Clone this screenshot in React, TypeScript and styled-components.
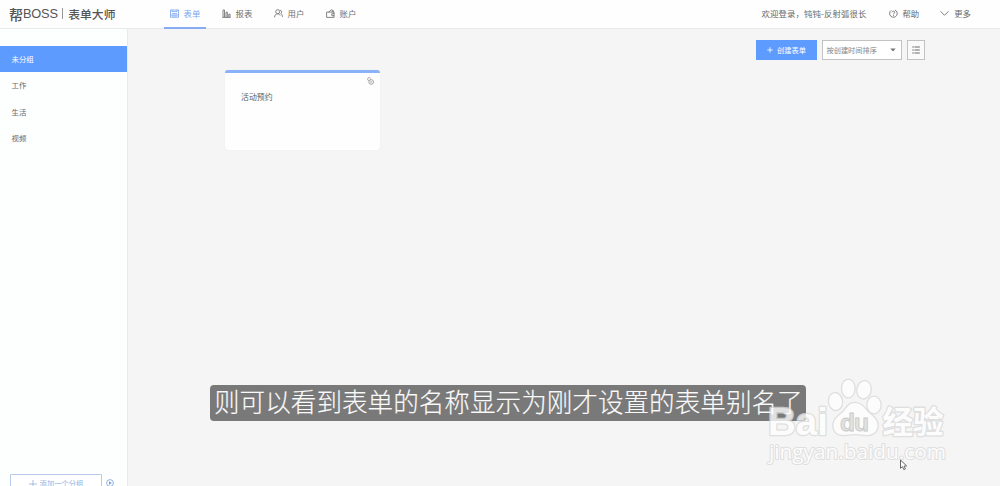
import React from "react";
import styled, { createGlobalStyle, css } from "styled-components";

const GlobalStyle = createGlobalStyle`
  * { box-sizing: border-box; }
  body {
    margin: 0;
    overflow: hidden;
    background: #f5f5f5;
    color: #555;
    font-family: "Noto Sans CJK SC", "Liberation Sans", sans-serif;
  }
`;

const Page = styled.div`
  position: relative;
  display: flex;
  flex-direction: column;
  width: 1000px;
  height: 486px;
  overflow: hidden;
  background: #f5f5f5;
`;

const Header = styled.header`
  display: flex;
  flex: none;
  height: 29px;
  background: #fefefe;
  border-bottom: 1px solid #e9e9e9;
  white-space: nowrap;
`;

const Brand = styled.div`
  display: flex;
  align-items: center;
  width: 164px;
  height: 27px;
  padding-left: 9px;
  color: #555;
  font-size: 12px;
  line-height: 26px;
`;

const BrandMark = styled.span`
  font-size: 14px;
  font-weight: 500;
`;

const BrandLatin = styled.span`
  font: 12.8px/27px "Liberation Sans", sans-serif;
  letter-spacing: -0.2px;
`;

const BrandDivider = styled.i`
  width: 1px;
  height: 11px;
  margin: 0 5px 0 4.5px;
  background: #999;
`;

const BrandName = styled.span`
  font-size: 11.8px;
  font-weight: 500;
`;

const Nav = styled.nav`
  display: flex;
  gap: 10px;
`;

const NavItem = styled.a<{ $active?: boolean }>`
  display: flex;
  align-items: center;
  gap: 5px;
  width: 42px;
  height: 29px;
  padding: 0 0 3px 5.6px;
  color: #707070;
  font-size: 8.4px;
  line-height: 26px;
  ${(p) =>
    p.$active &&
    css`
      color: #7ba6ee;
      box-shadow: inset 0 -2px #86adf3;
    `}
`;

const Account = styled.div`
  display: flex;
  align-items: center;
  height: 26px;
  margin-left: auto;
  padding-right: 29px;
  font-size: 8.4px;
  line-height: 26px;
  color: #686868;
`;

const Welcome = styled.span`
  width: 127px;
  letter-spacing: 0.12px;
`;

const HeaderLink = styled.a`
  display: flex;
  align-items: center;
  gap: 5px;
  & + & { margin-left: 21px; }
`;

const Body = styled.div`
  display: flex;
  flex: 1;
  min-height: 0;
`;

const Sidebar = styled.aside`
  display: flex;
  flex-direction: column;
  flex: none;
  width: 128px;
  padding-top: 16.6px;
  background: #fdfefe;
  border-right: 1px solid #e9e9e9;
`;

const Group = styled.a<{ $active?: boolean }>`
  height: 26.6px;
  padding-left: 11.5px;
  font-size: 7.4px;
  line-height: 25.6px;
  color: ${(p) => (p.$active ? "#fff" : "#686868")};
  background: ${(p) => (p.$active ? "#5e9bff" : "transparent")};
`;

const SidebarFooter = styled.div`
  display: flex;
  align-items: flex-start;
  gap: 4px;
  height: 12px;
  margin-top: auto;
  padding-left: 10px;
  overflow: hidden;
`;

const AddGroup = styled.button`
  display: flex;
  align-items: center;
  justify-content: center;
  gap: 3px;
  flex: none;
  width: 92px;
  height: 19px;
  padding: 0;
  border: 1px solid #b9cbe8;
  border-radius: 1px;
  background: #fff;
  color: #98b2de;
  font: 7.3px/17px "Noto Sans CJK SC", sans-serif;
`;

const PlayIcon = styled.svg`
  flex: none;
  margin-top: 5px;
`;

const Main = styled.main`
  flex: 1;
  padding: 11px 75px 0 97px;
`;

const Toolbar = styled.div`
  display: flex;
  justify-content: flex-end;
  align-items: center;
  height: 20px;
  margin-bottom: 10px;
`;

const CreateButton = styled.button`
  display: flex;
  align-items: center;
  justify-content: center;
  gap: 4px;
  width: 61px;
  height: 20px;
  padding: 0;
  border: 0;
  background: #5e9bff;
  color: #fff;
  font: 7.2px/20px "Noto Sans CJK SC", sans-serif;
`;

const SortSelect = styled.div`
  display: flex;
  align-items: center;
  justify-content: space-between;
  width: 80px;
  height: 20px;
  margin: 0 5px;
  padding: 0 5px 0 3.5px;
  border: 1px solid #c2c2c2;
  background: #fff;
  color: #858585;
  font-size: 7.2px;
  line-height: 17px;
`;

const ViewButton = styled.button`
  display: flex;
  align-items: center;
  justify-content: center;
  width: 18px;
  height: 20px;
  padding: 0;
  border: 1px solid #c2c2c2;
  background: #fafafa;
`;

const FormCard = styled.article`
  display: flex;
  justify-content: space-between;
  width: 155px;
  height: 80px;
  padding: 3.5px 6px 0 16px;
  border-top: 3px solid #8ab2fa;
  border-radius: 3px;
  background: #fefefe;
  box-shadow: 0 0 1px #e2e2e2;
`;

const FormTitle = styled.h3`
  margin: 14.5px 0 0;
  font-size: 7.9px;
  line-height: 12px;
  font-weight: 400;
  color: #606060;
`;

const Caption = styled.div`
  position: absolute;
  left: 210px;
  top: 385px;
  width: 596px;
  height: 36px;
  padding-left: 4px;
  border-radius: 4px;
  background: #797979;
  color: #fafafa;
  font-size: 25.6px;
  font-weight: 300;
  line-height: 32px;
  -webkit-text-stroke: 0.15px #fafafa;
  white-space: nowrap;
`;

const Watermark = styled.svg`
  position: absolute;
  left: 760px;
  top: 372px;
`;

const Pointer = styled.svg`
  position: absolute;
  left: 899px;
  top: 459px;
`;

const lineProps = { fill: "none", stroke: "currentColor", strokeWidth: 0.85 };

function FormIcon() {
  return (
    <svg width="9" height="9" viewBox="0 0 9 9" {...lineProps}>
      <rect x=".6" y="1" width="7.8" height="7.2" />
      <path d="M2 1v1.600h5V1M2 4.600h5M.6 6h7.800M2 7h5" />
    </svg>
  );
}

function ReportIcon() {
  return (
    <svg width="9" height="9" viewBox="0 0 9 9" {...lineProps}>
      <path d="M.4 8.4h8.2M1 1v7.4M2.5 1v7.4M1 1h1.5M4 3.2v5.2M5.4 3.2v5.2M4 3.2h1.4M6.8 5.2v3.2M8.1 5.2v3.2M6.8 5.2h1.3" />
    </svg>
  );
}

function UserIcon() {
  return (
    <svg width="9" height="9" viewBox="0 0 9 9" {...lineProps}>
      <circle cx="3.7" cy="2.7" r="2" />
      <path d="M.5 8.4c.1-2.2 1.3-3.5 3.2-3.5 1.1 0 2 .6 2.5 1.6M6.1 1.2c2 .1 2.1 2.9.6 3.4 1.1.5 1.7 1.7 1.8 3.3" />
    </svg>
  );
}

function WalletIcon() {
  return (
    <svg width="9" height="9" viewBox="0 0 9 9" {...lineProps}>
      <path d="M.6 3.1h7.5v5.3H.6zM2.5 3.1 5.4.8l2 .9v1.4M8.1 4.7H5.8v2h2.3M6.3 1.7v1.4" />
    </svg>
  );
}

function HelpIcon() {
  return (
    <svg width="9" height="9" viewBox="0 0 9 9" {...lineProps}>
      <path d="M2.3 1.3A3.8 3.8 0 1 0 6 1M3.2 3.3c.1-1.5 2.6-1.4 2.5 0 0 .8-1.2 1-1.2 2.1M4.5 6.2v.9" />
    </svg>
  );
}

function LinkIcon() {
  return (
    <svg width="7" height="8" viewBox="0 0 7 8" fill="none" stroke="#999" strokeWidth=".9">
      <circle cx="4.2" cy="5" r="2.3" />
      <path d="M1.9 4C-.3 2.5.8.2 2.4.6c.9.3 1.2 1 1.1 1.8M3.2 5h2" />
    </svg>
  );
}

const navItems = [
  { label: "表单", icon: <FormIcon />, active: true },
  { label: "报表", icon: <ReportIcon /> },
  { label: "用户", icon: <UserIcon /> },
  { label: "账户", icon: <WalletIcon /> },
];

const groups = ["未分组", "工作", "生活", "视频"];

function BaiduWatermark() {
  return (
    <Watermark width="192" height="98" viewBox="0 0 192 98">
      <g
        opacity=".78"
        fill="#fff"
        stroke="#d9d9d9"
        strokeWidth="2.6"
        strokeLinejoin="round"
        paintOrder="stroke"
      >
        <text x="8" y="62.5" fontFamily="Liberation Sans, sans-serif" fontWeight="700" fontSize="39" textLength="60" lengthAdjust="spacingAndGlyphs">
          Bai
        </text>
        <ellipse cx="75.5" cy="29.5" rx="6.4" ry="8.4" transform="rotate(-8 75.5 29.5)" />
        <ellipse cx="88.3" cy="16.5" rx="6.2" ry="8.8" />
        <ellipse cx="104" cy="17.8" rx="6.6" ry="8.6" transform="rotate(10 104 17.8)" />
        <ellipse cx="114" cy="33" rx="6.5" ry="8.2" />
        <path d="M95 31c-5 0-7 3-10 7-4 5-11.500 8-11.500 15.500 0 6.500 4.500 9.500 9.500 9.500 4 0 8-1 12-1s8 1 12 1c6 0 10.500-3.500 10.500-9.500 0-7.500-7.500-10.500-11.500-15.500-3-4-6-7-11-7Z" />
        <text x="122.5" y="60.5" fontFamily="Noto Sans CJK SC, sans-serif" fontWeight="700" fontSize="30.5" textLength="61">
          经验
        </text>
        <text x="9" y="87" fontFamily="Open Sans, sans-serif" fontWeight="400" fontSize="20" strokeWidth="2" textLength="177" lengthAdjust="spacingAndGlyphs">
          jingyan.baidu.com
        </text>
      </g>
      <text x="80" y="58.5" fill="#e2e2e2" stroke="#cacaca" strokeWidth=".9" fontFamily="Liberation Sans, sans-serif" fontWeight="700" fontSize="24.5" textLength="29">
        du
      </text>
    </Watermark>
  );
}

export default function App() {
  return (
    <>
      <GlobalStyle />
      <Page>
        <Header>
          <Brand>
            <BrandMark>帮</BrandMark>
            <BrandLatin>BOSS</BrandLatin>
            <BrandDivider />
            <BrandName>表单大师</BrandName>
          </Brand>
          <Nav>
            {navItems.map((item) => (
              <NavItem key={item.label} $active={item.active}>
                {item.icon}
                {item.label}
              </NavItem>
            ))}
          </Nav>
          <Account>
            <Welcome>欢迎登录，钝钝-反射弧很长</Welcome>
            <HeaderLink>
              <HelpIcon />
              帮助
            </HeaderLink>
            <HeaderLink>
              <svg width="9" height="9" viewBox="0 0 9 9" {...lineProps}>
                <path d="m.5 2.3 4 4 4-4" />
              </svg>
              更多
            </HeaderLink>
          </Account>
        </Header>
        <Body>
          <Sidebar>
            {groups.map((name, i) => (
              <Group key={name} $active={i === 0}>
                {name}
              </Group>
            ))}
            <SidebarFooter>
              <AddGroup>
                <svg width="8" height="8" viewBox="0 0 8 8" {...lineProps}>
                  <path d="M4 0v8M0 4h8" />
                </svg>
                添加一个分组
              </AddGroup>
              <PlayIcon width="8" height="8" viewBox="0 0 8 8">
                <circle cx="4" cy="4" r="3.4" fill="none" stroke="#86a8e2" strokeWidth=".9" />
                <path d="M3 2.2 5.8 4 3 5.8z" fill="#7599dc" />
              </PlayIcon>
            </SidebarFooter>
          </Sidebar>
          <Main>
            <Toolbar>
              <CreateButton>
                <svg width="6" height="6" viewBox="0 0 6 6" {...lineProps}>
                  <path d="M3 .3v5.4M.3 3h5.4" />
                </svg>
                创建表单
              </CreateButton>
              <SortSelect>
                按创建时间排序
                <svg width="6" height="4" viewBox="0 0 6 4">
                  <path d="M.3.5h5.4L3 3.6z" fill="#777" />
                </svg>
              </SortSelect>
              <ViewButton>
                <svg width="8" height="8" viewBox="0 0 8 8" stroke="#999" strokeWidth="1.5">
                  <path d="M.3 1h1.5M2.5 1h5.3M.3 4h1.5M2.5 4h5.3M.3 7h1.5M2.5 7h5.3" />
                </svg>
              </ViewButton>
            </Toolbar>
            <FormCard>
              <FormTitle>活动预约</FormTitle>
              <LinkIcon />
            </FormCard>
          </Main>
        </Body>
        <Caption>则可以看到表单的名称显示为刚才设置的表单别名了</Caption>
        <BaiduWatermark />
        <Pointer width="9" height="13" viewBox="0 0 9 13">
          <path d="M1.5 1v8.3l2-1.7 1.3 3 1.6-.7-1.3-2.8 2.5-.2z" fill="#fff" stroke="#666" strokeWidth="1" />
        </Pointer>
      </Page>
    </>
  );
}
